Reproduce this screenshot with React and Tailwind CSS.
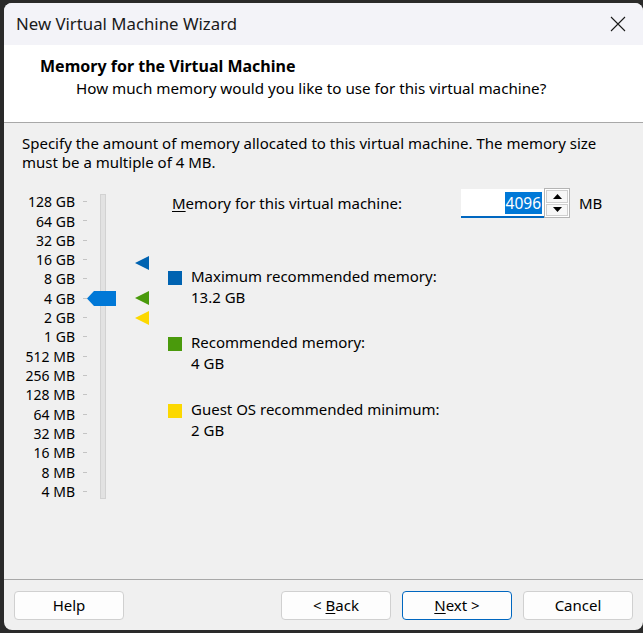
import React from "react";

const labels = [
  "128 GB", "64 GB", "32 GB", "16 GB", "8 GB", "4 GB", "2 GB", "1 GB",
  "512 MB", "256 MB", "128 MB", "64 MB", "32 MB", "16 MB", "8 MB", "4 MB",
];

const markers = { 3: "#0063b1", 5: "#4a9a0c", 6: "#fcd800" };

function Tri({ color }) {
  return (
    <svg width="14" height="14" viewBox="0 0 14 14">
      <polygon points="0,7 14,0 14,14" fill={color} />
    </svg>
  );
}

function Legend({ color, title, value, className }) {
  return (
    <div className={"flex " + className}>
      <div className="w-[14px] h-[14px] mt-[5px] shrink-0" style={{ backgroundColor: color }} />
      <div className="ml-[9px] leading-[21px] text-[15px] text-black whitespace-nowrap">
        <div>{title}</div>
        <div>{value}</div>
      </div>
    </div>
  );
}

function Button({ children, primary, className = "" }) {
  return (
    <button
      className={
        "h-[29px] rounded-[4px] bg-[#fdfdfd] text-[15px] text-black flex items-center justify-center " +
        (primary ? "border border-[#0067c0] " : "border border-[#d0d0d0] ") +
        className
      }
    >
      {children}
    </button>
  );
}

export default function App() {
  return (
    <div
      className="w-[643px] h-[633px] bg-[#2a2a2a] pt-[3px] pl-[4px] pb-[3px] overflow-hidden"
      style={{ fontFamily: '"Noto Sans", sans-serif' }}
    >
      <div className="h-full w-full rounded-[8px] overflow-hidden flex flex-col bg-[#f0f0f0]">
        {/* Title bar */}
        <div className="h-[42px] bg-[#f3f3f8] flex items-center pl-[12px] pr-[17px] shrink-0">
          <div className="text-[16.8px] text-[#1a1a1a]">New Virtual Machine Wizard</div>
          <svg className="ml-auto" width="16" height="16" viewBox="0 0 16 16">
            <path d="M1 1 L15 15 M15 1 L1 15" stroke="#1a1a1a" strokeWidth="1.1" />
          </svg>
        </div>

        {/* Header */}
        <div className="h-[78px] bg-white border-b border-[#a8a8a8] shrink-0 pt-[10px]">
          <div className="pl-[36px] text-[16px] font-bold leading-[22px] text-black">
            Memory for the Virtual Machine
          </div>
          <div className="pl-[72px] text-[15.2px] leading-[22px] text-black mt-[0px]">
            How much memory would you like to use for this virtual machine?
          </div>
        </div>

        {/* Body */}
        <div className="flex-1 pt-[11px]">
          <div className="pl-[18px] pr-[8px] text-[15px] leading-[19px] text-black">
            Specify the amount of memory allocated to this virtual machine. The memory size must be a multiple of 4 MB.
          </div>

          <div className="flex mt-[16px]">
            {/* Labels */}
            <div className="w-[71px] pt-[4px] flex flex-col">
              {labels.map((l) => (
                <div key={l} className="h-[19.33px] flex items-center justify-end text-[14px] text-black whitespace-nowrap">
                  {l}
                </div>
              ))}
            </div>
            {/* Ticks */}
            <div className="ml-[8px] w-[4px] pt-[4px] flex flex-col">
              {labels.map((l) => (
                <div key={l} className="h-[19.33px] flex items-center">
                  <div className="w-[4px] h-[1px] bg-[#c4c4c4]" />
                </div>
              ))}
            </div>
            {/* Track */}
            <div className="ml-[13px] w-[6px] pt-[6px]">
              <div className="relative w-[6px] h-[305px] bg-[#e2e2e2] border border-[#d2d2d2]">
                <svg className="absolute left-[-14px] top-[96px]" width="29" height="15" viewBox="0 0 29 15">
                  <polygon points="0,7.5 7,0 29,0 29,15 7,15" fill="#0078d7" />
                </svg>
              </div>
            </div>
            {/* Markers */}
            <div className="ml-[29px] w-[14px] pt-[4px] flex flex-col">
              {labels.map((l, i) => (
                <div key={l} className="h-[19.33px] flex items-center">
                  {markers[i] && (
                    <div className={i === 3 ? "translate-y-[3px]" : ""}>
                      <Tri color={markers[i]} />
                    </div>
                  )}
                </div>
              ))}
            </div>

            {/* Right column */}
            <div className="ml-[19px] flex flex-col">
              <div className="flex items-start h-[30px]">
                <div className="w-[293px] pl-[4px] h-[30px] flex items-center text-[15px] text-black whitespace-nowrap">
                  <span>
                    <span className="underline underline-offset-2">M</span>emory for this virtual machine:
                  </span>
                </div>
                <div className="mt-[1px] w-[83px] h-[29px] bg-white border-b-2 border-[#0067c0] flex items-center justify-end pr-[2px]">
                  <span className="bg-[#0078d7] text-white text-[15.5px] leading-[22px] px-[1px]">4096</span>
                </div>
                <div className="w-[26px] h-[30px] border border-[#b4b4b4] bg-white flex flex-col p-[1px] gap-[1px]">
                  <div className="flex-1 border border-[#cfcfcf] bg-[#f7f7f7] flex items-center justify-center">
                    <svg width="9" height="5" viewBox="0 0 9 5">
                      <polygon points="0,5 4.5,0 9,5" fill="#000" />
                    </svg>
                  </div>
                  <div className="flex-1 border border-[#cfcfcf] bg-[#f7f7f7] flex items-center justify-center">
                    <svg width="9" height="5" viewBox="0 0 9 5">
                      <polygon points="0,0 9,0 4.5,5" fill="#000" />
                    </svg>
                  </div>
                </div>
                <div className="ml-[9px] h-[30px] flex items-center text-[15px] text-black">MB</div>
              </div>

              <Legend className="mt-[48px]" color="#0063b1" title="Maximum recommended memory:" value="13.2 GB" />
              <Legend className="mt-[24px]" color="#4a9a0c" title="Recommended memory:" value="4 GB" />
              <Legend className="mt-[25px]" color="#fcd800" title="Guest OS recommended minimum:" value="2 GB" />
            </div>
          </div>
        </div>

        {/* Footer */}
        <div className="shrink-0 border-t border-[#a8a8a8] px-[10px] pt-[11px] pb-[10px] flex">
          <Button className="w-[110px]">Help</Button>
          <Button className="w-[110px] ml-auto">
            &lt;&nbsp;<span className="underline underline-offset-2">B</span>ack
          </Button>
          <Button primary className="w-[110px] ml-[11px]">
            <span className="underline underline-offset-2">N</span>ext &gt;
          </Button>
          <Button className="w-[110px] ml-[11px]">Cancel</Button>
        </div>
      </div>
    </div>
  );
}
